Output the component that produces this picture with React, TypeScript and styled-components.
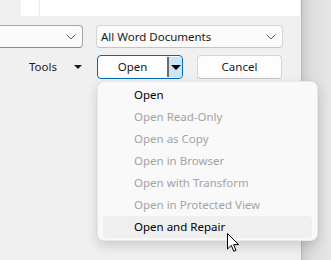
import React from "react";
import styled, { createGlobalStyle } from "styled-components";

const GlobalStyle = createGlobalStyle`
  html, body { margin: 0; padding: 0; }
  body { font-family: "Noto Sans", "Open Sans", sans-serif; font-size: 11.5px; }
`;

const Screen = styled.div`
  position: relative;
  width: 331px;
  height: 260px;
  display: flex;
  overflow: hidden;
`;

const Dialog = styled.div`
  width: 301px;
  background: #f0f0f0;
  display: flex;
  flex-direction: column;
`;

const Backdrop = styled.div`
  flex: 1;
  background: linear-gradient(to right, #b4b4b4 0px, #cfcfcf 2px, #dedede 12px, #e6e6e6 30px);
`;

const TopArea = styled.div`
  height: 16px;
  margin-left: 21px;
  margin-right: 1px;
  background: #ffffff;
  display: flex;
`;

const ColumnCell = styled.div`
  width: 18px;
  border-right: 1px solid #ececec;
`;

const FilterRow = styled.div`
  margin-top: 9px;
  display: flex;
  gap: 13px;
  height: 23px;
`;

const Combo = styled.div<{ $w: number; $clipped?: boolean }>`
  box-sizing: border-box;
  width: ${(p) => p.$w}px;
  height: 23px;
  background: #fbfbfb;
  border: 1px solid ${(p) => (p.$clipped ? "#a6a6a6" : "#d5d5d5")};
  border-bottom-color: ${(p) => (p.$clipped ? "#8c8c8c" : "#c4c4c4")};
  border-left: ${(p) => (p.$clipped ? "none" : undefined)};
  border-radius: ${(p) => (p.$clipped ? "0 4px 4px 0" : "4px")};
  display: flex;
  align-items: center;
  padding: 0 6px 0 4px;
  color: #1a1a1a;
`;

const ComboText = styled.span`
  flex: 1;
  white-space: nowrap;
  line-height: 14px;
`;

const Chevron = () => (
  <svg width="10" height="6" viewBox="0 0 10 6">
    <path d="M0.5 0.5 L5 5 L9.5 0.5" fill="none" stroke="#5e5e5e" strokeWidth="1" />
  </svg>
);

const ButtonRow = styled.div`
  margin-top: 7px;
  height: 24px;
  display: flex;
  align-items: center;
`;

const ToolsButton = styled.div`
  margin-left: 29px;
  width: 68px;
  display: flex;
  align-items: center;
  color: #1a1a1a;
`;

const ToolsLabel = styled.span`
  width: 45px;
  line-height: 14px;
`;

const Caret = styled.span`
  width: 0;
  height: 0;
  border-left: 4px solid transparent;
  border-right: 4px solid transparent;
  border-top: 4px solid #1a1a1a;
`;

const SplitButton = styled.div`
  box-sizing: border-box;
  width: 86px;
  height: 24px;
  border: 1px solid #0067c0;
  border-radius: 4px;
  background: #fdfdfd;
  display: flex;
  overflow: hidden;
`;

const SplitMain = styled.div`
  flex: 1;
  display: flex;
  align-items: center;
  justify-content: center;
  color: #1a1a1a;
  line-height: 14px;
`;

const SplitArrow = styled.div`
  width: 13px;
  background: #cce4f7;
  border-left: 2px solid #6b6b6b;
  margin: 1px 0;
  display: flex;
  align-items: center;
  justify-content: center;
`;

const DarkCaret = styled.span`
  width: 0;
  height: 0;
  border-left: 5px solid transparent;
  border-right: 5px solid transparent;
  border-top: 5px solid #000;
`;

const PlainButton = styled.div`
  box-sizing: border-box;
  margin-left: 14px;
  width: 85px;
  height: 24px;
  border: 1px solid #d5d5d5;
  border-bottom-color: #c4c4c4;
  border-radius: 4px;
  background: #fdfdfd;
  display: flex;
  align-items: center;
  justify-content: center;
  color: #1a1a1a;
  line-height: 14px;
`;

const Menu = styled.div`
  position: absolute;
  left: 97px;
  top: 81px;
  width: 221px;
  box-sizing: border-box;
  padding: 2px 5px 2px;
  background: #f9f9f9;
  border: 1px solid #e8e8e8;
  border-radius: 7px;
  box-shadow: 0 5px 12px rgba(0, 0, 0, 0.15), 0 0 2px rgba(0, 0, 0, 0.06);
  display: flex;
  flex-direction: column;
`;

const MenuItem = styled.div<{ $disabled?: boolean; $hover?: boolean }>`
  height: 22px;
  display: flex;
  align-items: center;
  padding-left: 31px;
  border-radius: 4px;
  line-height: 14px;
  color: ${(p) => (p.$disabled ? "#a3a3a3" : "#000")};
  background: ${(p) => (p.$hover ? "#efefef" : "transparent")};
`;

const Cursor = styled.svg`
  position: absolute;
  left: 227px;
  top: 233px;
`;

const items: { label: string; disabled?: boolean; hover?: boolean }[] = [
  { label: "Open" },
  { label: "Open Read-Only", disabled: true },
  { label: "Open as Copy", disabled: true },
  { label: "Open in Browser", disabled: true },
  { label: "Open with Transform", disabled: true },
  { label: "Open in Protected View", disabled: true },
  { label: "Open and Repair", hover: true },
];

export default function App() {
  return (
    <>
      <GlobalStyle />
      <Screen>
        <Dialog>
          <TopArea>
            <ColumnCell />
          </TopArea>
          <FilterRow>
            <Combo $w={83} $clipped>
              <ComboText />
              <Chevron />
            </Combo>
            <Combo $w={187}>
              <ComboText>All Word Documents</ComboText>
              <Chevron />
            </Combo>
          </FilterRow>
          <ButtonRow>
            <ToolsButton>
              <ToolsLabel>Tools</ToolsLabel>
              <Caret />
            </ToolsButton>
            <SplitButton>
              <SplitMain>Open</SplitMain>
              <SplitArrow>
                <DarkCaret />
              </SplitArrow>
            </SplitButton>
            <PlainButton>Cancel</PlainButton>
          </ButtonRow>
        </Dialog>
        <Backdrop />
        <Menu>
          {items.map((it) => (
            <MenuItem key={it.label} $disabled={it.disabled} $hover={it.hover}>
              {it.label}
            </MenuItem>
          ))}
        </Menu>
        <Cursor width="13" height="20" viewBox="0 0 13 20">
          <path
            d="M0.5 0.5 L0.5 16 L4.3 12.4 L6.8 18.3 L9 17.3 L6.6 11.6 L11.6 11.6 Z"
            fill="#fff"
            stroke="#000"
            strokeWidth="1"
            strokeLinejoin="miter"
          />
        </Cursor>
      </Screen>
    </>
  );
}
